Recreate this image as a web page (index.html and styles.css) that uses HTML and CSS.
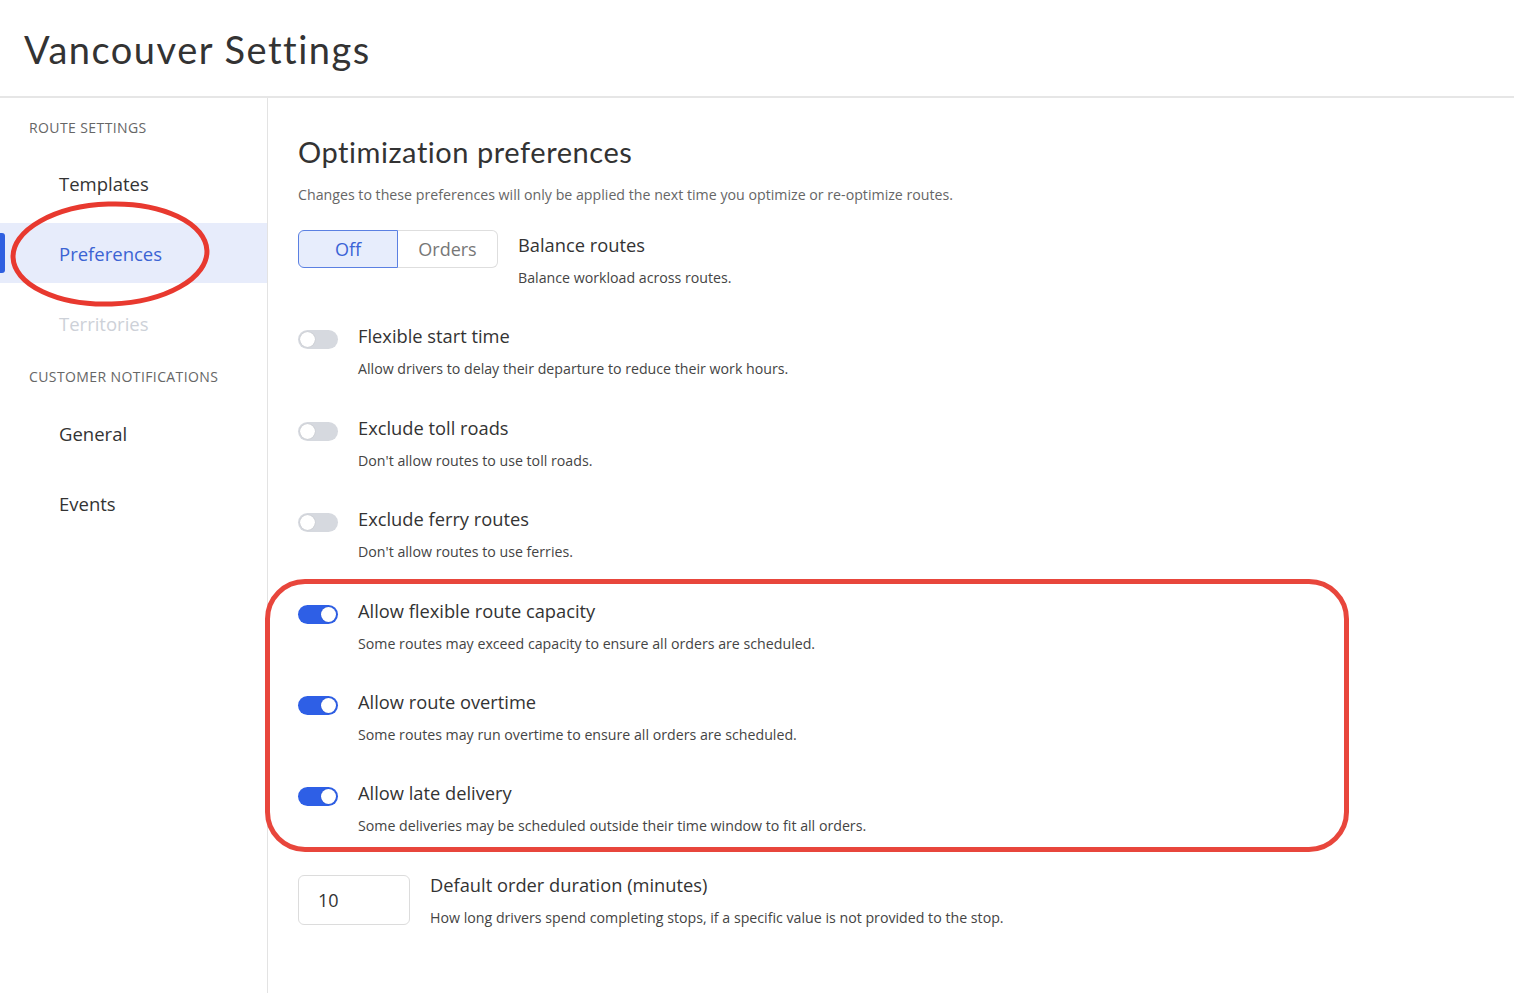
FILE: index.html
```html
<!DOCTYPE html>
<html lang="en">
<head>
<meta charset="utf-8">
<title>Vancouver Settings</title>
<link rel="stylesheet" href="styles.css">
</head>
<body>
<div class="page">
  <header class="topbar">
    <h1 class="page-title">Vancouver Settings</h1>
  </header>
  <div class="layout">
    <nav class="sidebar">
      <div class="nav-heading">Route Settings</div>
      <a class="nav-item">Templates</a>
      <a class="nav-item active">Preferences</a>
      <a class="nav-item disabled">Territories</a>
      <div class="nav-heading second">Customer Notifications</div>
      <a class="nav-item">General</a>
      <a class="nav-item">Events</a>
    </nav>
    <main class="content">
      <h2 class="section-title">Optimization preferences</h2>
      <p class="section-sub">Changes to these preferences will only be applied the next time you optimize or re-optimize routes.</p>

      <div class="settings">
        <div class="setting">
          <div class="segmented">
            <span class="seg seg-on">Off</span>
            <span class="seg seg-off">Orders</span>
          </div>
          <div class="setting-text shift">
            <div class="setting-title">Balance routes</div>
            <div class="setting-desc">Balance workload across routes.</div>
          </div>
        </div>

        <div class="setting">
          <span class="toggle"><span class="knob"></span></span>
          <div class="setting-text">
            <div class="setting-title">Flexible start time</div>
            <div class="setting-desc">Allow drivers to delay their departure to reduce their work hours.</div>
          </div>
        </div>

        <div class="setting">
          <span class="toggle"><span class="knob"></span></span>
          <div class="setting-text">
            <div class="setting-title">Exclude toll roads</div>
            <div class="setting-desc">Don't allow routes to use toll roads.</div>
          </div>
        </div>

        <div class="setting">
          <span class="toggle"><span class="knob"></span></span>
          <div class="setting-text">
            <div class="setting-title">Exclude ferry routes</div>
            <div class="setting-desc">Don't allow routes to use ferries.</div>
          </div>
        </div>

        <div class="setting">
          <span class="toggle on"><span class="knob"></span></span>
          <div class="setting-text">
            <div class="setting-title">Allow flexible route capacity</div>
            <div class="setting-desc">Some routes may exceed capacity to ensure all orders are scheduled.</div>
          </div>
        </div>

        <div class="setting">
          <span class="toggle on"><span class="knob"></span></span>
          <div class="setting-text">
            <div class="setting-title">Allow route overtime</div>
            <div class="setting-desc">Some routes may run overtime to ensure all orders are scheduled.</div>
          </div>
        </div>

        <div class="setting">
          <span class="toggle on"><span class="knob"></span></span>
          <div class="setting-text">
            <div class="setting-title">Allow late delivery</div>
            <div class="setting-desc">Some deliveries may be scheduled outside their time window to fit all orders.</div>
          </div>
        </div>

        <div class="setting">
          <div class="num-input">10</div>
          <div class="setting-text">
            <div class="setting-title">Default order duration (minutes)</div>
            <div class="setting-desc">How long drivers spend completing stops, if a specific value is not provided to the stop.</div>
          </div>
        </div>
      </div>
    </main>
  </div>

  <svg class="annot-ellipse" width="230" height="130" viewBox="0 0 230 130">
    <ellipse cx="110" cy="58" rx="97" ry="50" transform="rotate(-2 110 58)" fill="none" stroke="#e8392f" stroke-width="5"/>
  </svg>
  <div class="annot-rect"></div>
</div>
</body>
</html>
```
FILE: styles.css
```css
* { box-sizing: border-box; }

html, body {
  margin: 0;
  padding: 0;
  background: #ffffff;
}

body {
  font-family: "Open Sans", Lato, "Liberation Sans", sans-serif;
  color: #333;
}

.page {
  position: relative;
  width: 1514px;
  height: 993px;
  overflow: hidden;
}

.topbar {
  height: 98px;
  border-bottom: 2px solid #e6e6e6;
  display: flex;
  align-items: center;
  padding-left: 24px;
}

.page-title {
  margin: 0;
  font-family: Lato, "Open Sans", sans-serif;
  font-size: 38px;
  font-weight: 400;
  color: #333;
  letter-spacing: 1.5px;
  position: relative;
  top: 1px;
}

.layout {
  display: flex;
  height: 895px;
}

.sidebar {
  width: 268px;
  flex: none;
  border-right: 1px solid #e3e3e3;
  padding-top: 20px;
  display: flex;
  flex-direction: column;
}

.nav-heading {
  padding-left: 29px;
  font-size: 14px;
  line-height: 20px;
  text-transform: uppercase;
  color: #666;
  letter-spacing: 0.4px;
  margin-bottom: 15px;
}

.nav-heading.second {
  margin-top: 4px;
  margin-bottom: 16px;
}

.nav-item {
  display: flex;
  align-items: center;
  height: 60px;
  margin-bottom: 10px;
  padding-left: 59px;
  font-size: 18.5px;
  color: #333;
  position: relative;
}

.nav-item.active {
  background: #e7ecfb;
  color: #3b63d3;
}

.nav-item.active::before {
  content: "";
  position: absolute;
  left: 0;
  top: 10px;
  width: 5px;
  height: 40px;
  background: #2f5fe0;
  border-radius: 0 3px 3px 0;
}

.nav-item.disabled {
  color: #cdd1d8;
}

.content {
  flex: 1;
  padding: 37px 30px 0 30px;
}

.section-title {
  margin: 0;
  font-family: Lato, "Open Sans", sans-serif;
  font-size: 29px;
  line-height: 34px;
  font-weight: 400;
  color: #333;
  letter-spacing: 0.55px;
}

.section-sub {
  margin: 16px 0 0 0;
  font-size: 14.2px;
  line-height: 20px;
  color: #666;
}

.settings {
  margin-top: 25px;
  display: flex;
  flex-direction: column;
  gap: 36.4px;
}

.setting {
  display: flex;
  align-items: flex-start;
  gap: 20px;
}

.setting-text.shift {
  padding-top: 3px;
}

.setting-title {
  font-size: 18.3px;
  line-height: 24px;
  color: #333;
}

.setting-desc {
  margin-top: 11px;
  font-size: 14.2px;
  line-height: 20px;
  color: #444;
}

.segmented {
  display: flex;
  height: 38px;
  flex: none;
}

.seg {
  width: 100px;
  display: flex;
  align-items: center;
  justify-content: center;
  font-size: 18px;
}

.seg-on {
  background: #e7edfc;
  border: 1px solid #5b80e2;
  border-radius: 6px 0 0 6px;
  color: #3a63d6;
}

.seg-off {
  border: 1px solid #dedede;
  border-left: none;
  border-radius: 0 6px 6px 0;
  color: #777;
}

.toggle {
  flex: none;
  width: 40px;
  height: 19px;
  margin-top: 6px;
  border-radius: 10px;
  background: #d6d9df;
  position: relative;
}

.knob {
  position: absolute;
  top: 2px;
  left: 2px;
  width: 15px;
  height: 15px;
  border-radius: 50%;
  background: #fff;
  box-shadow: 0 0 1px rgba(0,0,0,0.25);
}

.toggle.on {
  background: #2e5fe6;
}

.toggle.on .knob {
  left: 23px;
}

.num-input {
  flex: none;
  width: 112px;
  height: 50px;
  margin-top: 2px;
  border: 1px solid #dcdcdc;
  border-radius: 6px;
  display: flex;
  align-items: center;
  padding-left: 19px;
  font-size: 18px;
  color: #333;
}

.annot-ellipse {
  position: absolute;
  left: 0;
  top: 196px;
}

.annot-rect {
  position: absolute;
  left: 265px;
  top: 579px;
  width: 1084px;
  height: 273px;
  border: 5px solid #e8463c;
  border-radius: 40px;
}
```
